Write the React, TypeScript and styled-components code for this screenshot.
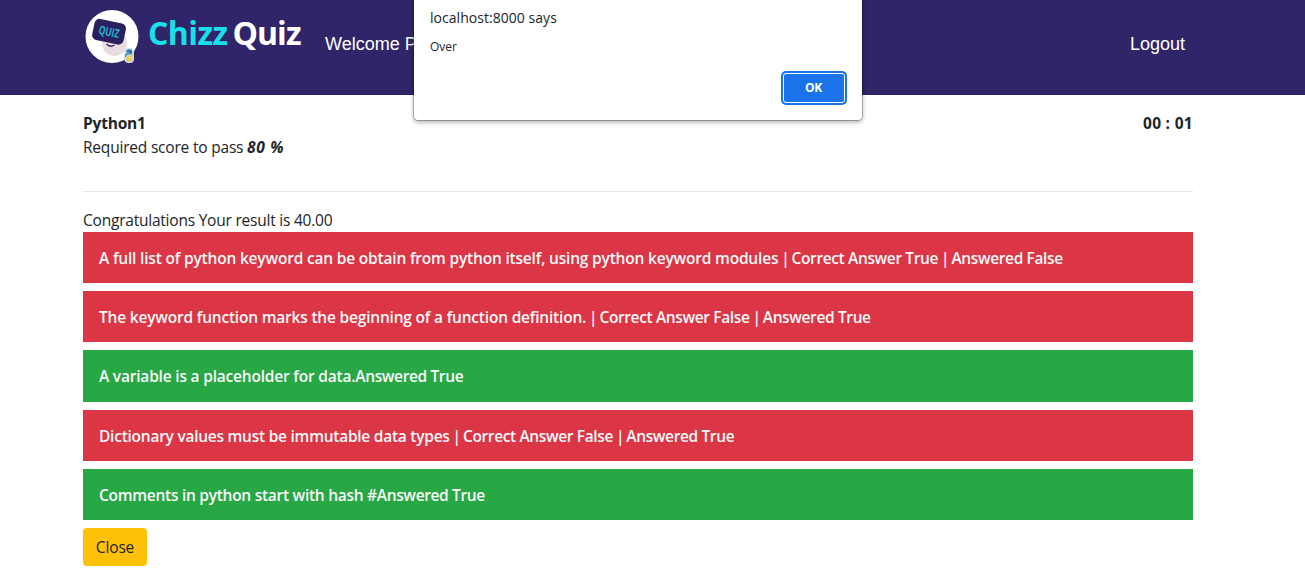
import React, { Fragment } from "react";
import styled, { createGlobalStyle } from "styled-components";

const ui = '"Open Sans", "Noto Sans", sans-serif';

const GlobalStyle = createGlobalStyle`
  *, *::before, *::after { box-sizing: border-box; }
  body {
    margin: 0;
    background: #fff;
    color: #212529;
    font-family: ${ui};
    font-size: 15.5px;
    line-height: 24px;
  }
`;

const Page = styled.div`
  position: relative;
  min-height: 588px;
`;

const Header = styled.header`
  height: 95px;
  background: #302568;
  border-bottom: 1px solid #291f60;
`;

const Container = styled.div`
  width: 1110px;
  margin-left: 83px;
`;

const NavRow = styled(Container)`
  display: flex;
  align-items: flex-start;
`;

const Brand = styled.div`
  display: flex;
  align-items: flex-start;
  width: 242px;
  padding: 8px 0 0 1px;
`;

const BrandName = styled.h1`
  display: flex;
  gap: 5px;
  margin: 0 0 0 9px;
  font-size: 32px;
  font-weight: 700;
  line-height: 50px;
  color: #fff;
`;

const BrandWord = styled.span<{ $accent?: boolean; $spacing: number }>`
  color: ${(p) => (p.$accent ? "#16e0ea" : "#fff")};
  letter-spacing: ${(p) => p.$spacing}px;
`;

const NavText = styled.span<{ $end?: boolean }>`
  font-family: "Liberation Sans", Arial, sans-serif;
  font-size: 18px;
  line-height: 24px;
  color: #fff;
  padding-top: 32px;
  white-space: nowrap;
  ${(p) => p.$end && "margin-left: auto; padding-right: 8px;"}
`;

const Main = styled(Container).attrs({ as: "main" })`
  padding-top: 16px;
`;

const InfoRow = styled.div`
  display: flex;
  justify-content: space-between;
`;

const Strong = styled.b<{ $spacing?: number }>`
  font-weight: 700;
  letter-spacing: ${(p) => p.$spacing ?? 0}px;
`;

const Text = styled.div<{ $spacing?: number }>`
  letter-spacing: ${(p) => p.$spacing ?? 0}px;
`;

const Divider = styled.hr`
  border: 0;
  border-top: 1px solid #e5e5e5;
  margin: 32px 0 16px;
`;

const AnswerList = styled.div`
  display: flex;
  flex-direction: column;
  gap: 8px;
  margin-bottom: 8px;
`;

const Answer = styled.div<{ $correct: boolean }>`
  padding: 17px 16px 15px;
  background: ${(p) => (p.$correct ? "#28a745" : "#dc3545")};
  color: #f8f9fa;
  font-size: 15.5px;
  font-weight: 600;
  line-height: 19.2px;
  letter-spacing: -0.37px;
  white-space: nowrap;
`;

const Question = styled.span<{ $spacing: number }>`
  letter-spacing: ${(p) => p.$spacing}px;
`;

const Pipe = styled.span`
  letter-spacing: -1.1px;
`;

const CloseButton = styled.button`
  display: block;
  width: 64px;
  height: 38px;
  padding: 0;
  border: 0;
  border-radius: 4px;
  background: #ffc107;
  color: #212529;
  font: 15.5px/24px ${ui};
  letter-spacing: -0.15px;
`;

const Dialog = styled.div`
  position: absolute;
  top: -4px;
  left: 414px;
  width: 448px;
  height: 124px;
  padding: 12px 17px 0 16px;
  display: flex;
  flex-direction: column;
  background: #fff;
  border-radius: 4px;
  box-shadow: 0 0 0 1px rgba(0, 0, 0, 0.24), 0 2px 5px rgba(0, 0, 0, 0.35);
`;

const DialogTitle = styled.div`
  font-size: 14px;
  line-height: 20px;
  letter-spacing: 0.04px;
`;

const DialogBody = styled.div`
  margin-top: 10px;
  font-size: 12px;
  line-height: 18px;
`;

const OkButton = styled.button`
  align-self: flex-end;
  width: 62px;
  height: 30px;
  margin-top: 17px;
  padding: 0 1px 0 0;
  border: 1px solid #fff;
  border-radius: 3px;
  box-shadow: 0 0 0 2px #1a73e8;
  background: #1a73e8;
  color: #fff;
  font: 700 12px/28px ${ui};
  letter-spacing: -0.3px;
`;

function Logo() {
  return (
    <svg width="55" height="56" viewBox="0 0 55 56">
      <circle cx="28" cy="28.5" r="26.5" fill="#fff" />
      <ellipse cx="30.5" cy="35" rx="12.5" ry="13" fill="#e9dcde" />
      <path d="M22.500 36q4 4 8 1" fill="none" stroke="#35286d" strokeWidth="1.300" />
      <g transform="rotate(12 25 24)">
        <rect x="9" y="13" width="32" height="21.500" rx="5" fill="#2b205f" />
        <text x="25" y="28" textAnchor="middle" fontFamily={ui} fontSize="12" fontWeight="700" fill="#20b5cd" textLength="21" lengthAdjust="spacingAndGlyphs">QUIZ</text>
      </g>
      <rect x="40.500" y="40" width="9.500" height="15" rx="4" fill="#c8def0" />
      <path d="M44 41.500h2.500q1.500 0 1.500 1.500v2q0 1.500-1.500 1.500h-2.500q-2 0-2 3h-.5q-1-3 .5-4h3.500v-.7h-3v-1.800q0-1.500 1.500-1.500z" fill="#3475a5" />
      <path d="M46 53.500h-2q-1.500 0-1.500-1.500v-2q0-1.500 1.500-1.500h2q2.500 0 2.500-3h.5q1 3-.5 4h-3.500v.7h3v1.800q0 1.500-2 1.500z" fill="#f0c736" />
    </svg>
  );
}

const answers = [
  { question: "A full list of python keyword can be obtain from python itself, using python keyword modules", expected: "True", answered: "False", spacing: -0.19 },
  { question: "The keyword function marks the beginning of a function definition.", expected: "False", answered: "True", spacing: -0.2 },
  { question: "A variable is a placeholder for data.", answered: "True", spacing: -0.2 },
  { question: "Dictionary values must be immutable data types", expected: "False", answered: "True", spacing: -0.25 },
  { question: "Comments in python start with hash #", answered: "True", spacing: -0.27 },
];

export default function App() {
  return (
    <Page>
      <GlobalStyle />
      <Header>
        <NavRow>
          <Brand>
            <Logo />
            <BrandName>
              <BrandWord $accent $spacing={-0.6}>Chizz</BrandWord>
              <BrandWord $spacing={-0.9}>Quiz</BrandWord>
            </BrandName>
          </Brand>
          <NavText>Welcome P</NavText>
          <NavText $end>Logout</NavText>
        </NavRow>
      </Header>
      <Main>
        <InfoRow>
          <Strong $spacing={-0.2}>Python1</Strong>
          <Strong $spacing={0.3}>00 : 01</Strong>
        </InfoRow>
        <Text $spacing={-0.2}>
          Required score to pass <Strong as="em" $spacing={0.7}>80 %</Strong>
        </Text>
        <Divider />
        <Text $spacing={-0.22}>Congratulations Your result is 40.00</Text>
        <AnswerList>
          {answers.map((a) => (
            <Answer key={a.question} $correct={!a.expected}>
              <Question $spacing={a.spacing}>{a.question}</Question>
              {a.expected && (
                <Fragment>
                  <Pipe>{" | "}</Pipe>
                  {`Correct Answer ${a.expected}`}
                  <Pipe>{" | "}</Pipe>
                </Fragment>
              )}
              {`Answered ${a.answered}`}
            </Answer>
          ))}
        </AnswerList>
        <CloseButton>Close</CloseButton>
      </Main>
      <Dialog role="alertdialog">
        <DialogTitle>localhost:8000 says</DialogTitle>
        <DialogBody>Over</DialogBody>
        <OkButton>OK</OkButton>
      </Dialog>
    </Page>
  );
}
